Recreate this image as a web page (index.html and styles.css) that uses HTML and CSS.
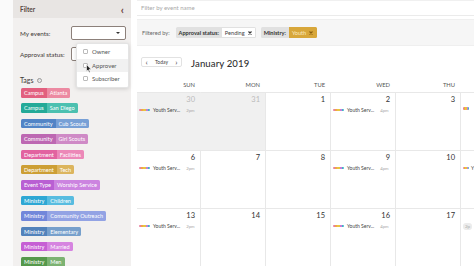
FILE: index.html
```html
<!DOCTYPE html>
<html lang="en">
<head>
    <meta charset="UTF-8">
    <title>Events Calendar</title>
    <link rel="stylesheet" href="styles.css">
</head>
<body>
    <div class="gutter"></div>

    <aside class="sidebar">
        <div class="sidebar-head">
            <span>Filter</span>
            <span class="collapse">&#x2039;</span>
        </div>
        <div class="sidebar-body">
            <div class="field">
                <label>My events:</label>
                <div class="select"><span class="caret"></span></div>
            </div>
            <div class="field">
                <label>Approval status:</label>
                <div class="select"><span class="caret"></span></div>
            </div>

            <div class="menu">
                <div class="menu-item"><span class="box"></span>Owner</div>
                <div class="menu-item active"><span class="box"></span>Approver</div>
                <div class="menu-item"><span class="box"></span>Subscriber</div>
                <svg class="cursor" width="6" height="9" viewBox="0 0 6 9">
                    <path d="M0.5 0.5 L0.5 7.5 L2 6 L3.2 8.5 L4.2 8 L3 5.6 L5.2 5.6 Z" fill="#222" stroke="#fff" stroke-width="0.6"/>
                </svg>
            </div>

            <div class="tags-title">Tags <span class="info">i</span></div>
            <div class="tags">
                <div class="tag c1"><span class="k">Campus</span><span class="v">Atlanta</span></div>
                <div class="tag c2"><span class="k">Campus</span><span class="v">San Diego</span></div>
                <div class="tag c3"><span class="k">Community</span><span class="v">Cub Scouts</span></div>
                <div class="tag c4"><span class="k">Community</span><span class="v">Girl Scouts</span></div>
                <div class="tag c5"><span class="k">Department</span><span class="v">Facilities</span></div>
                <div class="tag c6"><span class="k">Department</span><span class="v">Tech</span></div>
                <div class="tag c7"><span class="k">Event Type</span><span class="v">Worship Service</span></div>
                <div class="tag c8"><span class="k">Ministry</span><span class="v">Children</span></div>
                <div class="tag c9"><span class="k">Ministry</span><span class="v">Community Outreach</span></div>
                <div class="tag c10"><span class="k">Ministry</span><span class="v">Elementary</span></div>
                <div class="tag c11"><span class="k">Ministry</span><span class="v">Married</span></div>
                <div class="tag c12"><span class="k">Ministry</span><span class="v">Men</span></div>
            </div>
        </div>
    </aside>

    <main class="main">
        <div class="search">Filter by event name</div>

        <div class="filterbar">
            <span class="filtered">Filtered by:</span>
            <span class="chip-key">Approval status:</span>
            <span class="chip-val">Pending
                <svg class="x" width="4" height="4" viewBox="0 0 4 4"><path d="M0.5 0.5L3.5 3.5M3.5 0.5L0.5 3.5" stroke="#333" stroke-width="1.1"/></svg>
            </span>
            <span class="chip-key second">Ministry:</span>
            <span class="chip-val gold">Youth
                <svg class="x" width="4" height="4" viewBox="0 0 4 4"><path d="M0.5 0.5L3.5 3.5M3.5 0.5L0.5 3.5" stroke="#8a5f10" stroke-width="1.1"/></svg>
            </span>
        </div>

        <div class="toolbar">
            <div class="nav">
                <span>&#x2039;</span>
                <span class="today">Today</span>
                <span>&#x203A;</span>
            </div>
            <h2>January 2019</h2>
        </div>

        <div class="calendar">
            <div class="dow">SUN</div>
            <div class="dow">MON</div>
            <div class="dow">TUE</div>
            <div class="dow">WED</div>
            <div class="dow">THU</div>
            <div class="dow"></div>

            <div class="cell past"><div class="num">30</div>
                <div class="event"><span class="stripe"></span>Youth Serv...<em>2pm</em></div></div>
            <div class="cell past"><div class="num">31</div></div>
            <div class="cell"><div class="num">1</div></div>
            <div class="cell"><div class="num">2</div>
                <div class="event"><span class="stripe"></span>Youth Serv...<em>4pm</em></div></div>
            <div class="cell"><div class="num">3</div></div>
            <div class="cell edge"><div class="num"></div>
                <div class="event"><span class="stripe short"></span></div></div>

            <div class="cell"><div class="num">6</div>
                <div class="event"><span class="stripe"></span>Youth Serv...<em>2pm</em></div></div>
            <div class="cell"><div class="num">7</div></div>
            <div class="cell"><div class="num">8</div></div>
            <div class="cell"><div class="num">9</div>
                <div class="event"><span class="stripe"></span>Youth Serv...<em>4pm</em></div></div>
            <div class="cell"><div class="num">10</div></div>
            <div class="cell edge"><div class="num"></div>
                <div class="event"><span class="stripe short"></span>Y</div></div>

            <div class="cell"><div class="num">13</div>
                <div class="event"><span class="stripe"></span>Youth Serv...<em>2pm</em></div></div>
            <div class="cell"><div class="num">14</div></div>
            <div class="cell"><div class="num">15</div></div>
            <div class="cell"><div class="num">16</div>
                <div class="event"><span class="stripe"></span>Youth Serv...<em>4pm</em></div></div>
            <div class="cell"><div class="num">17</div></div>
            <div class="cell edge"><div class="num"></div>
                <div class="event"><span class="pill">2p</span></div></div>
        </div>
    </main>
</body>
</html>
```

FILE: styles.css
```css
* {
    margin: 0;
    padding: 0;
    box-sizing: border-box;
}

body {
    font-family: 'Lato', 'Noto Sans', sans-serif;
    width: 474px;
    height: 266px;
    overflow: hidden;
    display: flex;
    background: #fff;
    color: #444;
}

.gutter {
    width: 13px;
    flex-shrink: 0;
    background: #fafafa;
}

.sidebar {
    width: 118px;
    flex-shrink: 0;
    background: #f2f0ef;
    position: relative;
}

.sidebar-head {
    height: 18px;
    background: #e8e5e3;
    display: flex;
    align-items: center;
    justify-content: space-between;
    padding: 0 7px;
    font-size: 6.5px;
    font-weight: 700;
    color: #5a4844;
}

.collapse {
    font-size: 11px;
    font-weight: 700;
    color: #6a3e3a;
    line-height: 1;
}

.sidebar-body {
    padding: 8px 5px 0 7px;
}

.field {
    display: flex;
    align-items: center;
    justify-content: space-between;
    height: 14px;
    margin-bottom: 7px;
    font-size: 6.3px;
    color: #3f3a38;
}

.select {
    width: 55px;
    height: 14px;
    background: #fff;
    border: 1px solid #8c807a;
    border-radius: 2px;
    position: relative;
}

.caret {
    position: absolute;
    right: 5px;
    top: 5px;
    border-left: 2px solid transparent;
    border-right: 2px solid transparent;
    border-top: 2.5px solid #333;
}

.menu {
    position: absolute;
    left: 63px;
    top: 43px;
    width: 53px;
    height: 45px;
    background: #fff;
    border: 1px solid #e4e4e4;
    border-radius: 2px;
    box-shadow: 0 1px 4px rgba(0, 0, 0, 0.15);
    padding-top: 1px;
    z-index: 5;
}

.menu-item {
    height: 13.5px;
    display: flex;
    align-items: center;
    padding-left: 6px;
    font-size: 6px;
    color: #555;
}

.menu-item.active {
    background: #f1f1f1;
}

.box {
    width: 5px;
    height: 5px;
    border: 1px solid #bbb;
    border-radius: 1px;
    background: #fff;
    margin-right: 4px;
}

.cursor {
    position: absolute;
    left: 9px;
    top: 20px;
}

.tags-title {
    margin-top: 15px;
    font-size: 7px;
    color: #3f3a38;
    display: flex;
    align-items: center;
    gap: 3px;
}

.info {
    width: 5px;
    height: 5px;
    border: 0.7px solid #999;
    border-radius: 50%;
    font-size: 3.5px;
    color: #999;
    display: inline-flex;
    align-items: center;
    justify-content: center;
}

.tags {
    margin-top: 4px;
    display: flex;
    flex-direction: column;
    align-items: flex-start;
    gap: 5.9px;
    padding-left: 1px;
}

.tag {
    display: flex;
    height: 9.5px;
    border-radius: 1.5px;
    overflow: hidden;
    font-size: 5.6px;
    color: #fff;
    line-height: 9.5px;
}

.tag span {
    padding: 0 3px;
}

.c1 .k { background: #e2607f; } .c1 .v { background: #ec8aa2; }
.c2 .k { background: #24aa98; } .c2 .v { background: #4cc0b0; }
.c3 .k { background: #5284c6; } .c3 .v { background: #78a0d6; }
.c4 .k { background: #bd68b2; } .c4 .v { background: #cf8ac6; }
.c5 .k { background: #e263a0; } .c5 .v { background: #ec88b8; }
.c6 .k { background: #cd9f35; } .c6 .v { background: #dcb55e; }
.c7 .k { background: #b95fd3; } .c7 .v { background: #cc84e0; }
.c8 .k { background: #2ea7d4; } .c8 .v { background: #58bce0; }
.c9 .k { background: #7287da; } .c9 .v { background: #93a3e4; }
.c10 .k { background: #5282bb; } .c10 .v { background: #77a0cc; }
.c11 .k { background: #c65fd4; } .c11 .v { background: #d684e0; }
.c12 .k { background: #55984b; } .c12 .v { background: #7cb272; }

.main {
    flex: 1;
    margin-left: 6px;
    min-width: 0;
    overflow: hidden;
}

.search {
    height: 16px;
    border-top: 1px solid #f0f0f0;
    border-bottom: 1px solid #ebebeb;
    font-size: 6px;
    color: #a8a8a8;
    padding-left: 4px;
    line-height: 14px;
}

.filterbar {
    margin-top: 3px;
    height: 27px;
    background: #f6f6f6;
    border-top: 1px solid #efefef;
    border-bottom: 1px solid #efefef;
    display: flex;
    align-items: center;
    padding-left: 5px;
    font-size: 5.6px;
}

.filtered {
    color: #666;
    margin-right: 6px;
}

.chip-key,
.chip-val {
    height: 11px;
    line-height: 11px;
    padding: 0 3px;
    display: flex;
    align-items: center;
}

.chip-key {
    background: #e1e1e1;
    color: #333;
    font-weight: 700;
    border-radius: 1.5px 0 0 1.5px;
}

.chip-key.second {
    margin-left: 5px;
}

.chip-val {
    background: #fff;
    color: #444;
    border: 1px solid #e1e1e1;
    border-left: none;
    border-radius: 0 1.5px 1.5px 0;
}

.chip-val .x {
    margin-left: 3px;
}

.chip-val.gold {
    background: #d8a73a;
    border-color: #d8a73a;
    color: #fbe9c0;
}

.toolbar {
    height: 29px;
    display: flex;
    align-items: center;
    padding-left: 4px;
    padding-top: 5px;
}

.nav {
    height: 10px;
    width: 41px;
    border: 1px solid #e2e2e2;
    border-radius: 2px;
    display: flex;
    align-items: center;
    justify-content: space-around;
    font-size: 8px;
    color: #444;
    margin-top: -2px;
}

.nav .today {
    font-size: 5px;
}

.toolbar h2 {
    margin-left: 9px;
    font-size: 9.6px;
    font-weight: 500;
    color: #333;
    letter-spacing: 0.1px;
}

.calendar {
    display: grid;
    grid-template-columns: 63px repeat(4, 65px) 14px;
    grid-template-rows: 17px repeat(3, 58px);
}

.dow {
    text-align: right;
    padding-right: 5px;
    font-size: 5.8px;
    color: #555;
    line-height: 19px;
}

.cell {
    border-top: 1px solid #e8e8e8;
    border-left: 1px solid #e8e8e8;
    padding: 2px 5px 0 2px;
}

.cell:nth-child(6n + 1) {
    border-left: none;
}

.cell.edge {
    padding-right: 0;
    overflow: hidden;
}

.cell.past {
    background: #f0f0f0;
    border-left-color: #f0f0f0;
}

.num {
    text-align: right;
    font-size: 7.5px;
    color: #333;
    height: 10px;
    line-height: 10px;
}

.past .num {
    color: #bbb;
}

.event {
    margin-top: 2px;
    display: flex;
    align-items: center;
    font-size: 5px;
    color: #444;
    white-space: nowrap;
}

.event em {
    font-style: normal;
    color: #a8a8a8;
    font-size: 4.3px;
    margin-left: 6px;
}

.stripe {
    width: 11px;
    height: 2.5px;
    margin-right: 3px;
    border-radius: 1px;
    background: linear-gradient(90deg, #e87f9f 0 20%, #f0a44c 20% 40%, #e8c440 40% 60%, #c57dd8 60% 80%, #3fb3c8 80%);
}

.stripe.short {
    width: 6px;
    margin-right: 2px;
}

.pill {
    background: #ececec;
    color: #aaa;
    border-radius: 3px;
    padding: 0 2px;
    font-size: 4.5px;
    line-height: 7px;
}
```
